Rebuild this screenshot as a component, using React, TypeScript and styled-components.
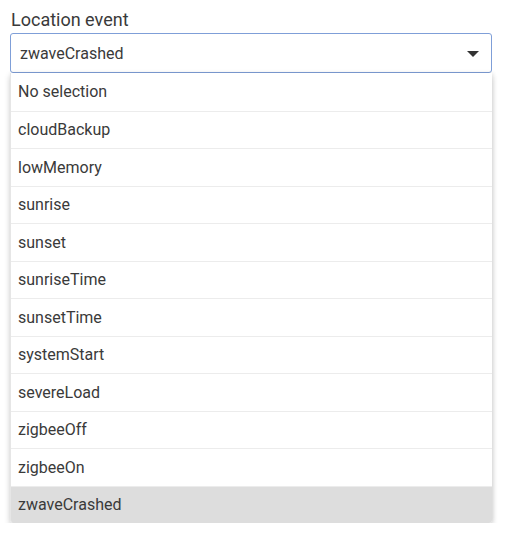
import React from 'react';
import styled, { createGlobalStyle } from 'styled-components';

const Global = createGlobalStyle`
	body {
		margin: 0;
		background: #ffffff;
		font-family: Roboto, 'Liberation Sans', sans-serif;
	}
`;

const Field = styled.div`
	padding: 8px 24px 0 10px;
	width: 482px;
`;

const Label = styled.div`
	font-size: 18px;
	color: #3a3a3a;
	line-height: 24px;
	margin-bottom: 1px;
	padding-left: 1px;
`;

const Select = styled.div`
	height: 40px;
	box-sizing: border-box;
	border: 1px solid #7f9fd8;
	border-radius: 3px;
	display: flex;
	align-items: center;
	justify-content: space-between;
	padding: 0 12px 0 9px;
	font-size: 16px;
	color: #3a3a3a;
`;

const Caret = styled.span`
	width: 0;
	height: 0;
	border-left: 6px solid transparent;
	border-right: 6px solid transparent;
	border-top: 6px solid #333333;
	margin-top: 2px;
`;

const Menu = styled.ul`
	list-style: none;
	margin: 0;
	padding: 0;
	border-left: 1px solid #e6e6e6;
	box-shadow: 0 3px 6px rgba(0, 0, 0, 0.18), 1px 0 4px rgba(0, 0, 0, 0.08);
	border-radius: 0 0 3px 3px;
	overflow: hidden;
`;

const Option = styled.li<{ selected?: boolean }>`
	height: 37.5px;
	box-sizing: border-box;
	display: flex;
	align-items: center;
	padding-left: 7px;
	font-size: 16px;
	color: #3a3a3a;
	background: ${(p) => (p.selected ? '#dddddd' : '#ffffff')};
	border-top: 1px solid #ececec;

	&:first-child {
		border-top: none;
	}
`;

const events = [
	'No selection',
	'cloudBackup',
	'lowMemory',
	'sunrise',
	'sunset',
	'sunriseTime',
	'sunsetTime',
	'systemStart',
	'severeLoad',
	'zigbeeOff',
	'zigbeeOn',
	'zwaveCrashed',
];

function App() {
	const current = 'zwaveCrashed';
	return (
		<>
			<Global />
			<Field>
				<Label>Location event</Label>
				<Select>
					<span>{current}</span>
					<Caret />
				</Select>
				<Menu>
					{events.map((e) => (
						<Option key={e} selected={e === current}>
							{e}
						</Option>
					))}
				</Menu>
			</Field>
		</>
	);
}

export default App;
